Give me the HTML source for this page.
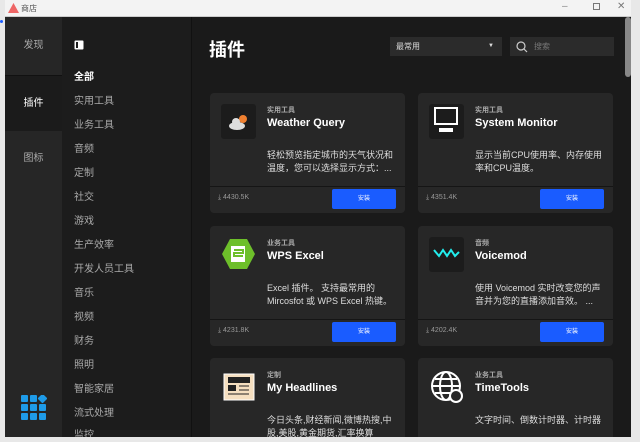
<!DOCTYPE html>
<html><head><meta charset="utf-8"><style>
*{margin:0;padding:0;box-sizing:border-box}
html,body{width:640px;height:442px;overflow:hidden}
body{background:#e8e8e8;font-family:"Liberation Sans","Noto Sans CJK SC",sans-serif;position:relative}
.title{position:absolute;left:5px;top:0;width:626px;height:17px;background:#f3f3f3;border-bottom:1px solid #ccc}
.title span{position:absolute;left:16px;top:3px;font-size:8px;color:#555}
.win{position:absolute;left:5px;top:17px;width:626px;height:420px;background:#1b1b1b;overflow:hidden}
.nav{position:absolute;left:0;top:0;width:57px;height:420px;background:#1e1e1e;border-right:1px solid #2a2a2a}
.nav div{position:absolute;left:0;width:57px;text-align:center;font-size:10px;color:#aaa}
.side{position:absolute;left:57px;top:0;width:130px;height:420px;background:#1c1c1c;border-right:1px solid #111;overflow:hidden}
.side p{position:absolute;left:12px;font-size:10px;color:#aaa}
.main{position:absolute;left:187px;top:0;width:439px;height:420px;background:#1a1a1a;overflow:hidden}
.card{position:absolute;width:195px;height:120px;background:#272727;border-radius:4px}
.ic{position:absolute;left:11px;top:11px;width:35px;height:35px;background:#1c1c1c;border-radius:3px}
.cat{position:absolute;left:57px;top:12px;font-size:7px;color:#aaa;font-weight:bold}
.nm{position:absolute;left:57px;top:24px;font-size:11px;color:#fff;font-weight:bold}
.ds{position:absolute;left:57px;top:56px;width:132px;font-size:9px;line-height:13px;color:#ddd}
.ft{position:absolute;left:0;top:93px;width:195px;height:1px;background:#151515}
.dl{position:absolute;left:8px;top:101px;font-size:7px;color:#999}
.bt{position:absolute;left:122px;top:96px;width:64px;height:20px;background:#1a5cff;border-radius:2px;color:#fff;font-size:6px;text-align:center;line-height:20px}
</style></head><body>
<div class="title"><svg style="position:absolute;left:3px;top:3px" width="11" height="10"><path d="M5.5 0L11 10H0z" fill="#e66"/></svg><span>商店</span>
<span style="left:557px;top:1px;font-size:10px;color:#888">–</span>
<span style="left:588px;top:3px;width:7px;height:7px;border:1px solid #777"></span>
<span style="left:612px;top:1px;font-size:10px;color:#777">✕</span></div>
<div style="position:absolute;left:0;top:20px;width:3px;height:3px;border-radius:50%;background:#1a5cff"></div>
<div class="win">
<div class="nav">
<div style="top:0;height:58px;background:#262626;line-height:58px;">发现</div>
<div style="top:58px;height:56px;line-height:56px;color:#fff;background:#1b1b1b;border-top:1px solid #111">插件</div>
<div style="top:114px;height:56px;line-height:56px;background:#262626">图标</div>
<div style="top:170px;height:250px;background:#262626"></div>
<svg style="position:absolute;left:16px;top:378px" width="26" height="26"><g fill="#1e9be8"><rect x="0" y="0" width="7" height="7" rx="1"/><rect x="9" y="0" width="7" height="7" rx="1"/><rect x="18" y="0" width="7" height="7" rx="1" transform="rotate(45 21.5 3.5)"/><rect x="0" y="9" width="7" height="7" rx="1"/><rect x="9" y="9" width="7" height="7" rx="1"/><rect x="18" y="9" width="7" height="7" rx="1"/><rect x="0" y="18" width="7" height="7" rx="1"/><rect x="9" y="18" width="7" height="7" rx="1"/><rect x="18" y="18" width="7" height="7" rx="1"/></g></svg>
</div>
<div class="side">
<svg style="position:absolute;left:12px;top:23px" width="10" height="10"><rect x="0.5" y="0.5" width="9" height="9" rx="1" fill="#fff"/><rect x="2" y="2" width="2" height="6" fill="#1c1c1c"/></svg>
<p style="top:51px;color:#fff;font-weight:bold">全部</p>
<p style="top:75px">实用工具</p><p style="top:99px">业务工具</p><p style="top:123px">音频</p><p style="top:147px">定制</p><p style="top:171px">社交</p><p style="top:195px">游戏</p><p style="top:219px">生产效率</p><p style="top:243px">开发人员工具</p><p style="top:267px">音乐</p><p style="top:291px">视频</p><p style="top:315px">财务</p><p style="top:339px">照明</p><p style="top:363px">智能家居</p><p style="top:387px">流式处理</p><p style="top:409px">监控</p>
</div>
<div class="main">
<div style="position:absolute;left:17px;top:19px;font-size:18px;font-weight:bold;color:#fff">插件</div>
<div style="position:absolute;left:198px;top:20px;width:112px;height:19px;background:#2b2b2b;color:#ddd;font-size:8px;line-height:19px;padding-left:6px">最常用<span style="position:absolute;right:8px;font-size:6px">▼</span></div>
<div style="position:absolute;left:318px;top:20px;width:104px;height:19px;background:#2b2b2b;color:#777;font-size:8px;line-height:19px;padding-left:24px">搜索<svg style="position:absolute;left:6px;top:4px" width="12" height="12"><circle cx="5" cy="5" r="4" stroke="#ccc" stroke-width="1.2" fill="none"/><path d="M8 8l3 3" stroke="#ccc" stroke-width="1.2"/></svg></div>
<div style="position:absolute;right:0;top:0;width:6px;height:60px;background:#888;border-radius:3px"></div>

<div class="card" style="left:18px;top:76px"><div class="ic"><svg width="35" height="35"><circle cx="22" cy="15" r="4" fill="#f08030"/><ellipse cx="16" cy="22" rx="8" ry="4" fill="#ddd"/><circle cx="15" cy="18" r="4" fill="#ddd"/></svg></div><div class="cat">实用工具</div><div class="nm">Weather Query</div><div class="ds">轻松预览指定城市的天气状况和温度，您可以选择显示方式：...</div><div class="ft"></div><div class="dl">⤓ 4430.5K</div><div class="bt">安装</div></div>
<div class="card" style="left:226px;top:76px"><div class="ic"><svg width="35" height="35"><rect x="6" y="4" width="22" height="16" fill="none" stroke="#fff" stroke-width="2"/><path d="M10 24h14v4H10z" fill="#fff"/></svg></div><div class="cat">实用工具</div><div class="nm">System Monitor</div><div class="ds">显示当前CPU使用率、内存使用率和CPU温度。</div><div class="ft"></div><div class="dl">⤓ 4351.4K</div><div class="bt">安装</div></div>
<div class="card" style="left:18px;top:209px"><div class="ic" style="background:none"><svg width="35" height="35"><polygon points="9,2 26,2 34,17 26,32 9,32 1,17" fill="#6dbf2a"/><rect x="10" y="9" width="14" height="16" fill="#fff"/><path d="M13 13h9v3h-9v3h9" stroke="#6dbf2a" stroke-width="2" fill="none"/></svg></div><div class="cat">业务工具</div><div class="nm">WPS Excel</div><div class="ds">Excel 插件。 支持最常用的 Mircosfot 或 WPS Excel 热键。</div><div class="ft"></div><div class="dl">⤓ 4231.8K</div><div class="bt">安装</div></div>
<div class="card" style="left:226px;top:209px"><div class="ic"><svg width="35" height="35"><path d="M5 13l5 6 4-6 4 6 4-6 4 6 4-4" stroke="#2ee" stroke-width="2" fill="none"/></svg></div><div class="cat">音频</div><div class="nm">Voicemod</div><div class="ds">使用 Voicemod 实时改变您的声音并为您的直播添加音效。 ...</div><div class="ft"></div><div class="dl">⤓ 4202.4K</div><div class="bt">安装</div></div>
<div class="card" style="left:18px;top:341px"><div class="ic" style="background:none"><svg width="35" height="35"><rect x="3" y="5" width="30" height="26" fill="#f5dfc0" stroke="#fff"/><rect x="7" y="8" width="22" height="6" fill="#222"/><rect x="7" y="16" width="8" height="6" fill="#222"/><path d="M18 17h10M18 21h10M7 25h21" stroke="#222"/></svg></div><div class="cat">定制</div><div class="nm">My Headlines</div><div class="ds">今日头条,财经新闻,微博热搜,中股,美股,黄金期货,汇率换算</div></div>
<div class="card" style="left:226px;top:341px"><div class="ic" style="background:none"><svg width="35" height="35"><circle cx="17" cy="17" r="14" stroke="#fff" stroke-width="2" fill="none"/><ellipse cx="17" cy="17" rx="6" ry="14" stroke="#fff" stroke-width="2" fill="none"/><path d="M3 17h28M6 10h22M6 24h22" stroke="#fff" stroke-width="2"/><circle cx="27" cy="27" r="6" fill="#272727" stroke="#fff" stroke-width="2"/></svg></div><div class="cat">业务工具</div><div class="nm">TimeTools</div><div class="ds">文字时间、倒数计时器、计时器</div></div>
</div>
</div>
</body></html>
